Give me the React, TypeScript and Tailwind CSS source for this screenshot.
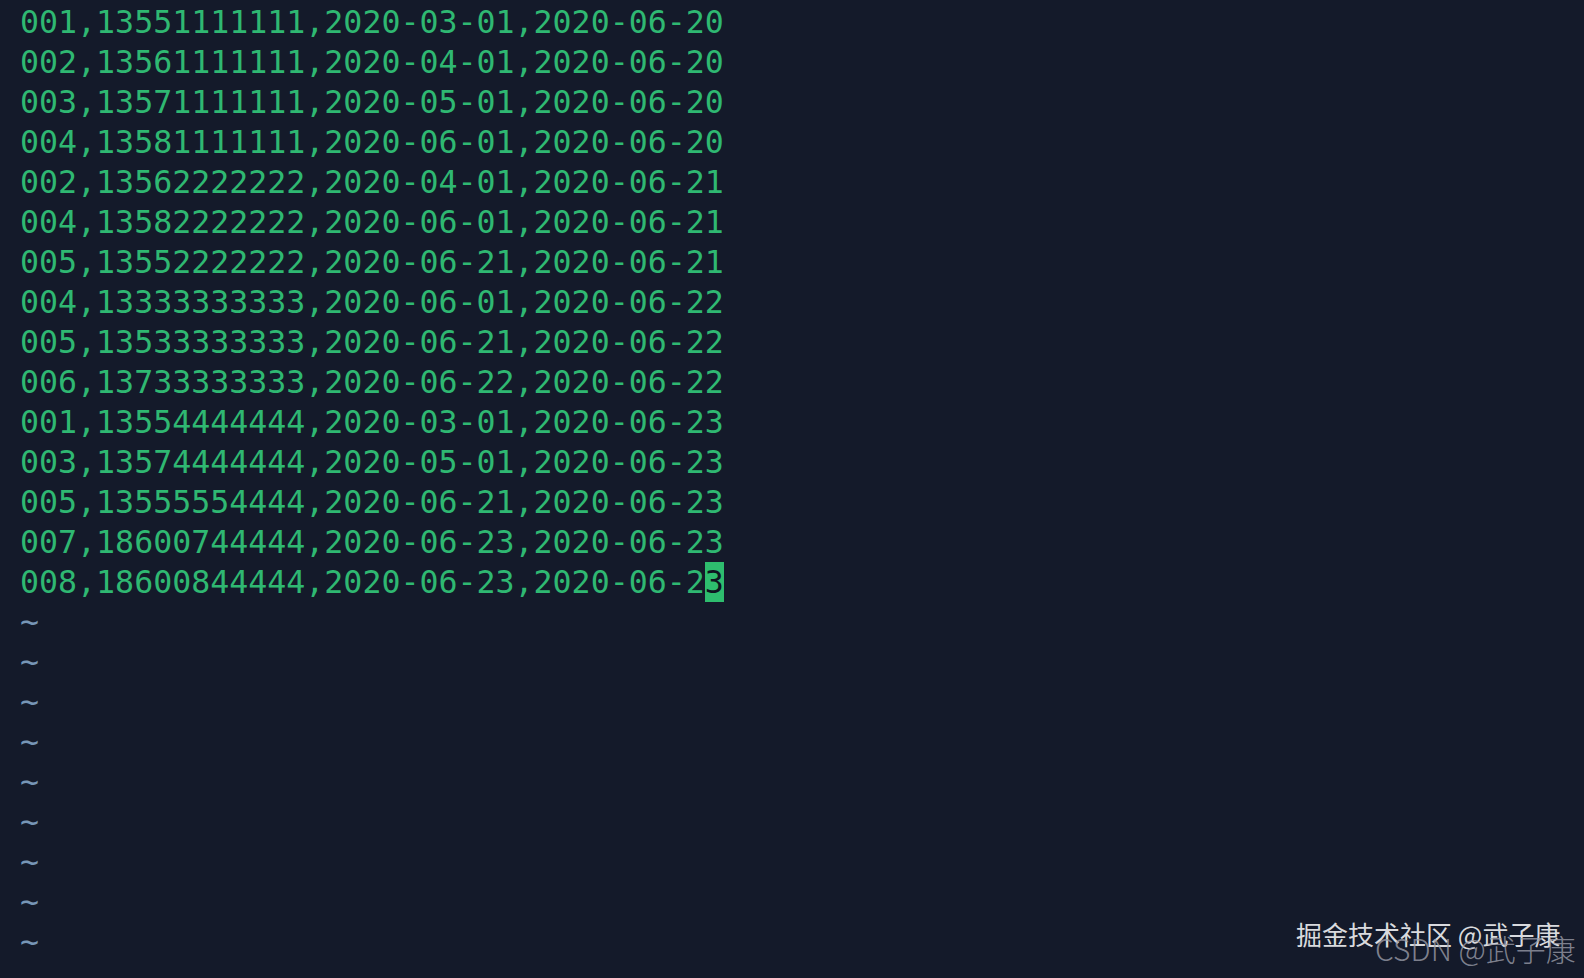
import React from "react";

const rows = [
  "001,13551111111,2020-03-01,2020-06-20",
  "002,13561111111,2020-04-01,2020-06-20",
  "003,13571111111,2020-05-01,2020-06-20",
  "004,13581111111,2020-06-01,2020-06-20",
  "002,13562222222,2020-04-01,2020-06-21",
  "004,13582222222,2020-06-01,2020-06-21",
  "005,13552222222,2020-06-21,2020-06-21",
  "004,13333333333,2020-06-01,2020-06-22",
  "005,13533333333,2020-06-21,2020-06-22",
  "006,13733333333,2020-06-22,2020-06-22",
  "001,13554444444,2020-03-01,2020-06-23",
  "003,13574444444,2020-05-01,2020-06-23",
  "005,13555554444,2020-06-21,2020-06-23",
  "007,18600744444,2020-06-23,2020-06-23",
];

export default function App() {
  return (
    <div className="relative w-[1584px] h-[978px] overflow-hidden bg-[#141a2a]">
      <div
        className="flex flex-col pt-[2px] pl-[20px] text-[31.6px] leading-[40px] text-[#2fb872] whitespace-pre"
        style={{ fontFamily: '"DejaVu Sans Mono", monospace' }}
      >
        {rows.map((r, i) => (
          <div key={i} className="h-[40px]">{r}</div>
        ))}
        <div className="h-[40px]">
          008,18600844444,2020-06-23,2020-06-2
          <span className="inline-block h-[40px] bg-[#2ebd6e] text-[#0f1420] align-top">3</span>
        </div>
        {Array.from({ length: 9 }).map((_, i) => (
          <div key={"t" + i} className="h-[40px] text-[#7796b6]">~</div>
        ))}
      </div>
      <div
        className="absolute left-[1296px] top-[918px] text-[26px] leading-[32px] text-[#d9dade] whitespace-nowrap"
        style={{ fontFamily: '"Noto Sans CJK SC", sans-serif' }}
      >
        掘金技术社区 @武子康
      </div>
      <div
        className="absolute left-[1375px] top-[930px] text-[30px] leading-[36px] text-[#9a9ca8]/80 whitespace-nowrap font-light"
        style={{ fontFamily: '"Noto Sans CJK SC", sans-serif' }}
      >
        CSDN @武子康
      </div>
    </div>
  );
}
